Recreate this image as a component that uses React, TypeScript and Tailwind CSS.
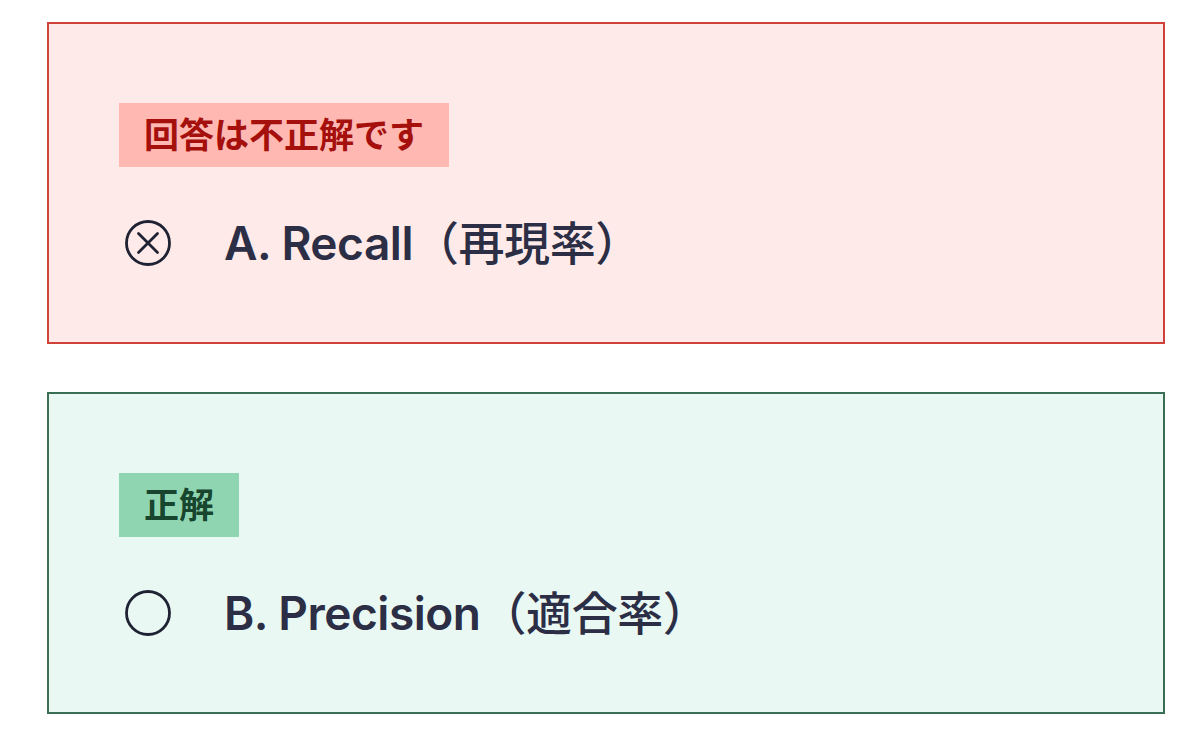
import React from 'react';

const sans = "font-['Inter','Noto_Sans_CJK_JP',sans-serif]";

const CrossCircle = () => (
  <svg width="48" height="48" viewBox="0 0 48 48" fill="none" className="shrink-0">
    <circle cx="24" cy="24" r="21.5" stroke="#1f2233" strokeWidth="2.8" />
    <path d="M14.5 14.5L33.5 33.5M33.5 14.5L14.5 33.5" stroke="#1f2233" strokeWidth="2.8" strokeLinecap="round" />
  </svg>
);

const EmptyCircle = () => (
  <svg width="48" height="48" viewBox="0 0 48 48" fill="none" className="shrink-0">
    <circle cx="24" cy="24" r="21.5" stroke="#1f2233" strokeWidth="2.8" />
  </svg>
);

type AnswerProps = {
  tone: 'wrong' | 'right';
  badge: string;
  label: string;
  note: string;
};

const AnswerCard = ({ tone, badge, label, note }: AnswerProps) => {
  const wrong = tone === 'wrong';
  return (
    <div
      className={
        wrong
          ? 'h-[322px] border-2 border-[#d0413a] bg-[#feeae9] pl-[70px] pt-[79px]'
          : 'h-[322px] border-2 border-[#3a6e55] bg-[#e9f8f3] pl-[70px] pt-[79px]'
      }
    >
      <div className="flex">
        <span
          className={
            wrong
              ? 'flex h-[64px] items-center bg-[#ffb9b2] px-[25px] text-[35px] font-bold text-[#a50f0c]'
              : 'flex h-[64px] items-center bg-[#8fd5b1] px-[25px] text-[35px] font-bold text-[#17452d]'
          }
        >
          {badge}
        </span>
      </div>
      <div className="mt-[47px] flex h-[58px] items-center">
        <div className="ml-[5px]">{wrong ? <CrossCircle /> : <EmptyCircle />}</div>
        <p className="ml-[52px] text-[46px] font-semibold tracking-[-0.01em] text-[#2b2e45]">
          {label}
          <span className="font-medium">（{note}）</span>
        </p>
      </div>
    </div>
  );
};

export default function App() {
  return (
    <div className={`${sans} min-h-[755px] bg-white pl-[47px] pt-[22px]`}>
      <div className="flex w-[1118px] flex-col gap-[48px]">
        <AnswerCard tone="wrong" badge="回答は不正解です" label="A. Recall" note="再現率" />
        <AnswerCard tone="right" badge="正解" label="B. Precision" note="適合率" />
      </div>
    </div>
  );
}
